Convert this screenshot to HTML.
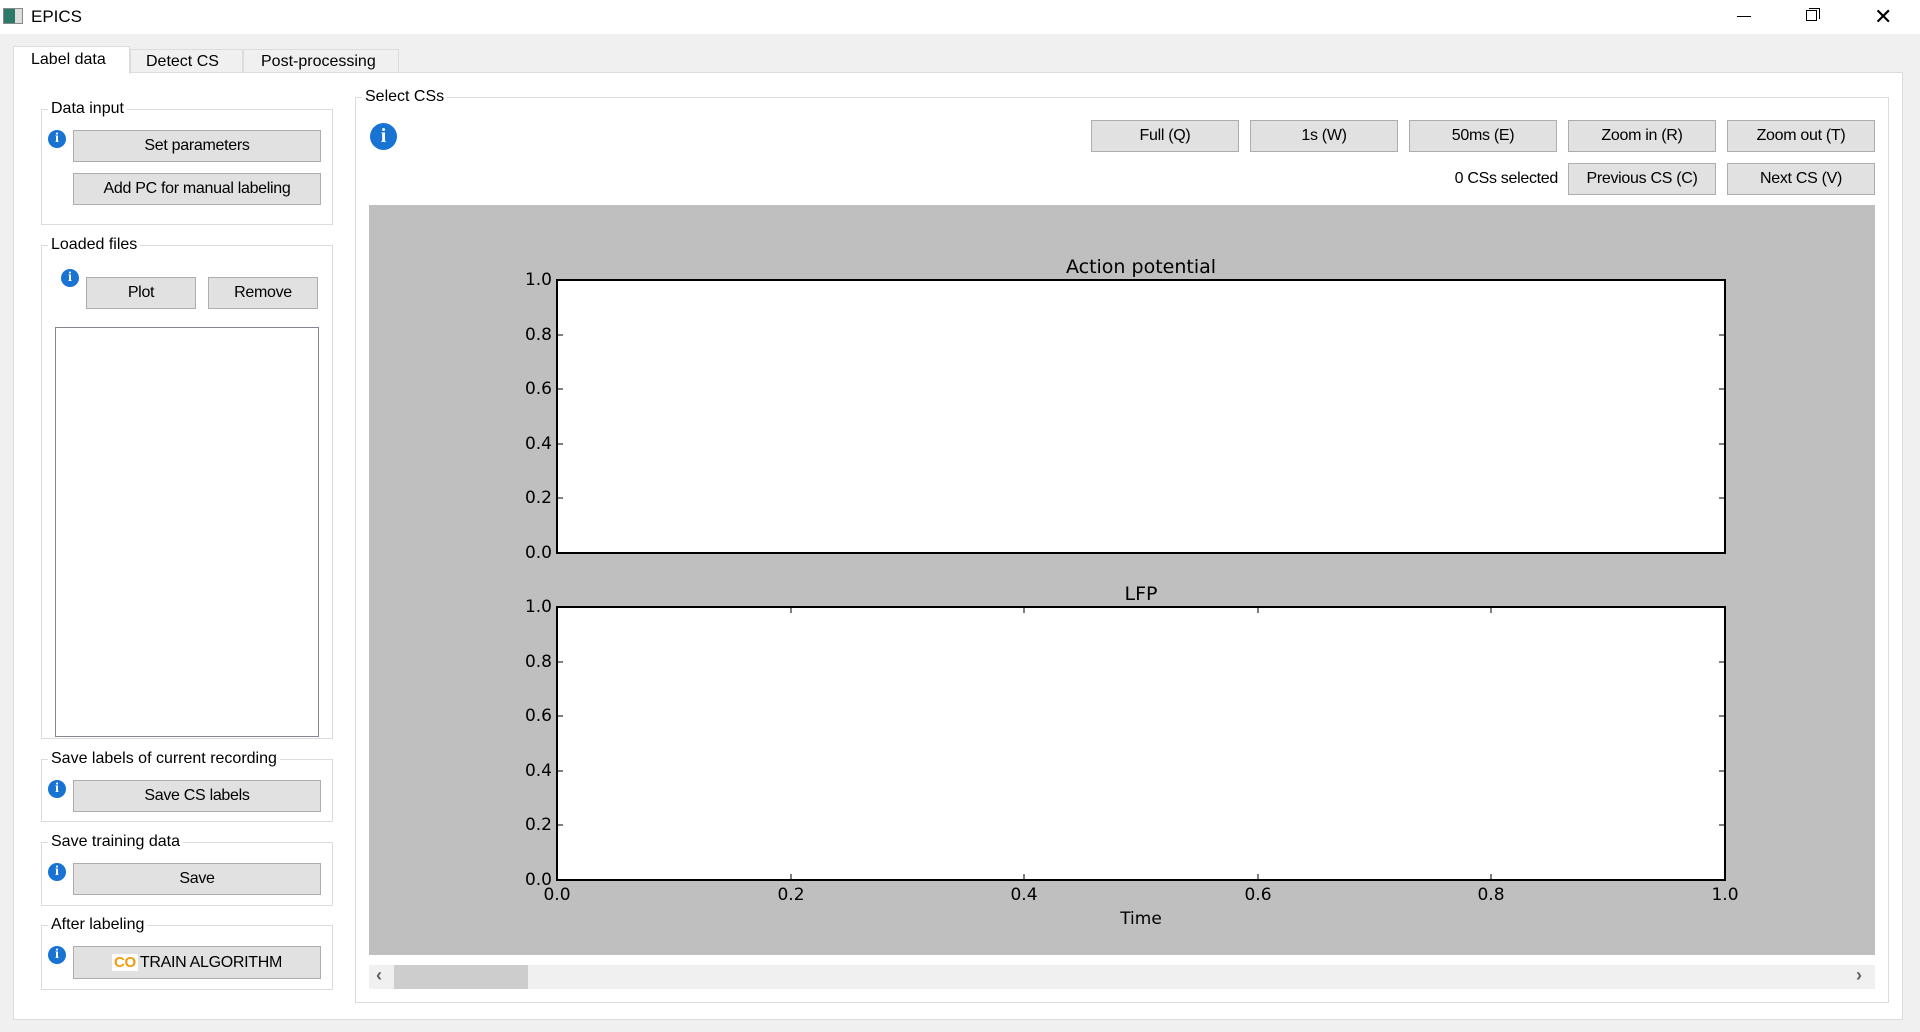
<!DOCTYPE html>
<html><head><meta charset="utf-8"><style>
*{box-sizing:border-box;margin:0;padding:0}
body{width:1920px;height:1032px;background:#f0f0f0;font-family:"Liberation Sans",sans-serif;font-size:16px;color:#000;position:relative;overflow:hidden}
.a{position:absolute}
.btn{position:absolute;background:#e1e1e1;border:1px solid #adadad;text-align:center;font-size:16px;display:flex;align-items:center;justify-content:center;letter-spacing:-0.3px}
.grp{position:absolute;border:1px solid #dcdcdc}
.gt{position:absolute;background:#fff;padding:0 3px;font-size:16px;top:-11px;left:6px;line-height:20px}
.info{position:absolute;width:18px;height:18px;border-radius:50%;background:#1873d3;color:#fff;font-weight:bold;font-size:14px;text-align:center;line-height:18px;font-family:"Liberation Serif",serif}
</style></head><body>
<div class="a" style="left:0;top:0;width:1920px;height:34px;background:#fff"></div>
<div class="a" style="left:3px;top:8px;width:20px;height:16px;border:1px solid #888;background:linear-gradient(90deg,#2a7a6a 0 60%,#ddd 60%)"></div>
<div class="a" style="left:31px;top:7px;font-size:17px">EPICS</div>
<div class="a" style="left:1737px;top:16px;width:14px;height:1px;background:#000"></div>
<div class="a" style="left:1806px;top:10px;width:11px;height:11px;border:1px solid #000;background:#fff"></div>
<div class="a" style="left:1809px;top:8px;width:11px;height:11px;border-top:1px solid #000;border-right:1px solid #000"></div>
<div class="a" style="left:1874px;top:4px;font-size:22px;font-weight:200">✕</div>

<div class="a" style="left:13px;top:72px;width:1890px;height:948px;background:#fff;border:1px solid #dcdcdc"></div>
<div class="a" style="left:13px;top:46px;width:117px;height:28px;background:#fff;border:1px solid #dcdcdc;border-bottom:none;padding:4px 0 0 17px">Label data</div>
<div class="a" style="left:130px;top:49px;width:113px;height:24px;background:#f0f0f0;border:1px solid #dcdcdc;padding:3px 0 0 15px">Detect CS</div>
<div class="a" style="left:243px;top:49px;width:156px;height:24px;background:#f0f0f0;border:1px solid #dcdcdc;padding:3px 0 0 17px">Post-processing</div>

<div class="grp" style="left:41px;top:109px;width:292px;height:116px"><div class="gt">Data input</div></div>
<div class="info" style="left:48px;top:130px">i</div>
<div class="btn" style="left:73px;top:130px;width:248px;height:32px">Set parameters</div>
<div class="btn" style="left:73px;top:173px;width:248px;height:32px">Add PC for manual labeling</div>

<div class="grp" style="left:41px;top:245px;width:292px;height:494px"><div class="gt">Loaded files</div></div>
<div class="info" style="left:61px;top:269px">i</div>
<div class="btn" style="left:86px;top:277px;width:110px;height:32px">Plot</div>
<div class="btn" style="left:208px;top:277px;width:110px;height:32px">Remove</div>
<div class="a" style="left:55px;top:327px;width:264px;height:410px;border:1px solid #828790;background:#fff"></div>

<div class="grp" style="left:41px;top:759px;width:292px;height:63px"><div class="gt">Save labels of current recording</div></div>
<div class="info" style="left:48px;top:780px">i</div>
<div class="btn" style="left:73px;top:780px;width:248px;height:32px">Save CS labels</div>

<div class="grp" style="left:41px;top:842px;width:292px;height:64px"><div class="gt">Save training data</div></div>
<div class="info" style="left:48px;top:863px">i</div>
<div class="btn" style="left:73px;top:863px;width:248px;height:32px">Save</div>

<div class="grp" style="left:41px;top:925px;width:292px;height:65px"><div class="gt">After labeling</div></div>
<div class="info" style="left:48px;top:946px">i</div>
<div class="btn" style="left:73px;top:946px;width:248px;height:33px"><span style="display:inline-block;background:#fff;color:#f29b0e;font-weight:bold;font-size:15px;padding:0 2px;margin-right:2px">CO</span>TRAIN ALGORITHM</div>

<div class="grp" style="left:355px;top:97px;width:1534px;height:906px"><div class="gt">Select CSs</div></div>
<div class="info" style="left:370px;top:123px;width:27px;height:27px;line-height:27px;font-size:20px">i</div>
<div class="btn" style="left:1091px;top:120px;width:148px;height:32px">Full (Q)</div>
<div class="btn" style="left:1250px;top:120px;width:148px;height:32px">1s (W)</div>
<div class="btn" style="left:1409px;top:120px;width:148px;height:32px">50ms (E)</div>
<div class="btn" style="left:1568px;top:120px;width:148px;height:32px">Zoom in (R)</div>
<div class="btn" style="left:1727px;top:120px;width:148px;height:32px">Zoom out (T)</div>
<div class="a" style="left:1400px;width:158px;text-align:right;top:170px;font-size:16px;letter-spacing:-0.3px">0 CSs selected</div>
<div class="btn" style="left:1568px;top:163px;width:148px;height:32px">Previous CS (C)</div>
<div class="btn" style="left:1727px;top:163px;width:148px;height:32px">Next CS (V)</div>

<svg class="a" style="left:369px;top:205px" width="1506" height="750" font-family="DejaVu Sans, sans-serif" font-size="17">
<rect width="1506" height="750" fill="#bfbfbf"/>
<g transform="translate(-369,-205)">
<rect x="557" y="280" width="1168" height="273" fill="#fff" stroke="#000" stroke-width="2"/>
<rect x="557" y="607" width="1168" height="273" fill="#fff" stroke="#000" stroke-width="2"/>
<text x="1141" y="273" text-anchor="middle" font-size="19">Action potential</text>
<text x="1141" y="600" text-anchor="middle" font-size="19">LFP</text>
<g text-anchor="end">
<text x="552" y="285">1.0</text><text x="552" y="340">0.8</text><text x="552" y="394">0.6</text><text x="552" y="449">0.4</text><text x="552" y="503">0.2</text><text x="552" y="558">0.0</text>
<text x="552" y="612">1.0</text><text x="552" y="667">0.8</text><text x="552" y="721">0.6</text><text x="552" y="776">0.4</text><text x="552" y="830">0.2</text><text x="552" y="885">0.0</text>
</g>
<g stroke="#000" stroke-width="1">
<path d="M557 335h6M557 389h6M557 444h6M557 498h6M1725 335h-6M1725 389h-6M1725 444h-6M1725 498h-6"/>
<path d="M557 662h6M557 716h6M557 771h6M557 825h6M1725 662h-6M1725 716h-6M1725 771h-6M1725 825h-6"/>
<path d="M791 880v-6M1024 880v-6M1258 880v-6M1491 880v-6M791 607v6M1024 607v6M1258 607v6M1491 607v6"/>
</g>
<g text-anchor="middle">
<text x="557" y="900">0.0</text><text x="791" y="900">0.2</text><text x="1024" y="900">0.4</text><text x="1258" y="900">0.6</text><text x="1491" y="900">0.8</text><text x="1725" y="900">1.0</text>
<text x="1141" y="924">Time</text>
</g>
</g>
</svg>

<div class="a" style="left:369px;top:965px;width:1506px;height:24px;background:#f0f0f0"></div>
<div class="a" style="left:394px;top:965px;width:134px;height:24px;background:#cdcdcd"></div>
<div class="a" style="left:376px;top:965px;font-size:18px;color:#606060;font-weight:bold">‹</div>
<div class="a" style="left:1856px;top:965px;font-size:18px;color:#606060;font-weight:bold">›</div>
</body></html>
